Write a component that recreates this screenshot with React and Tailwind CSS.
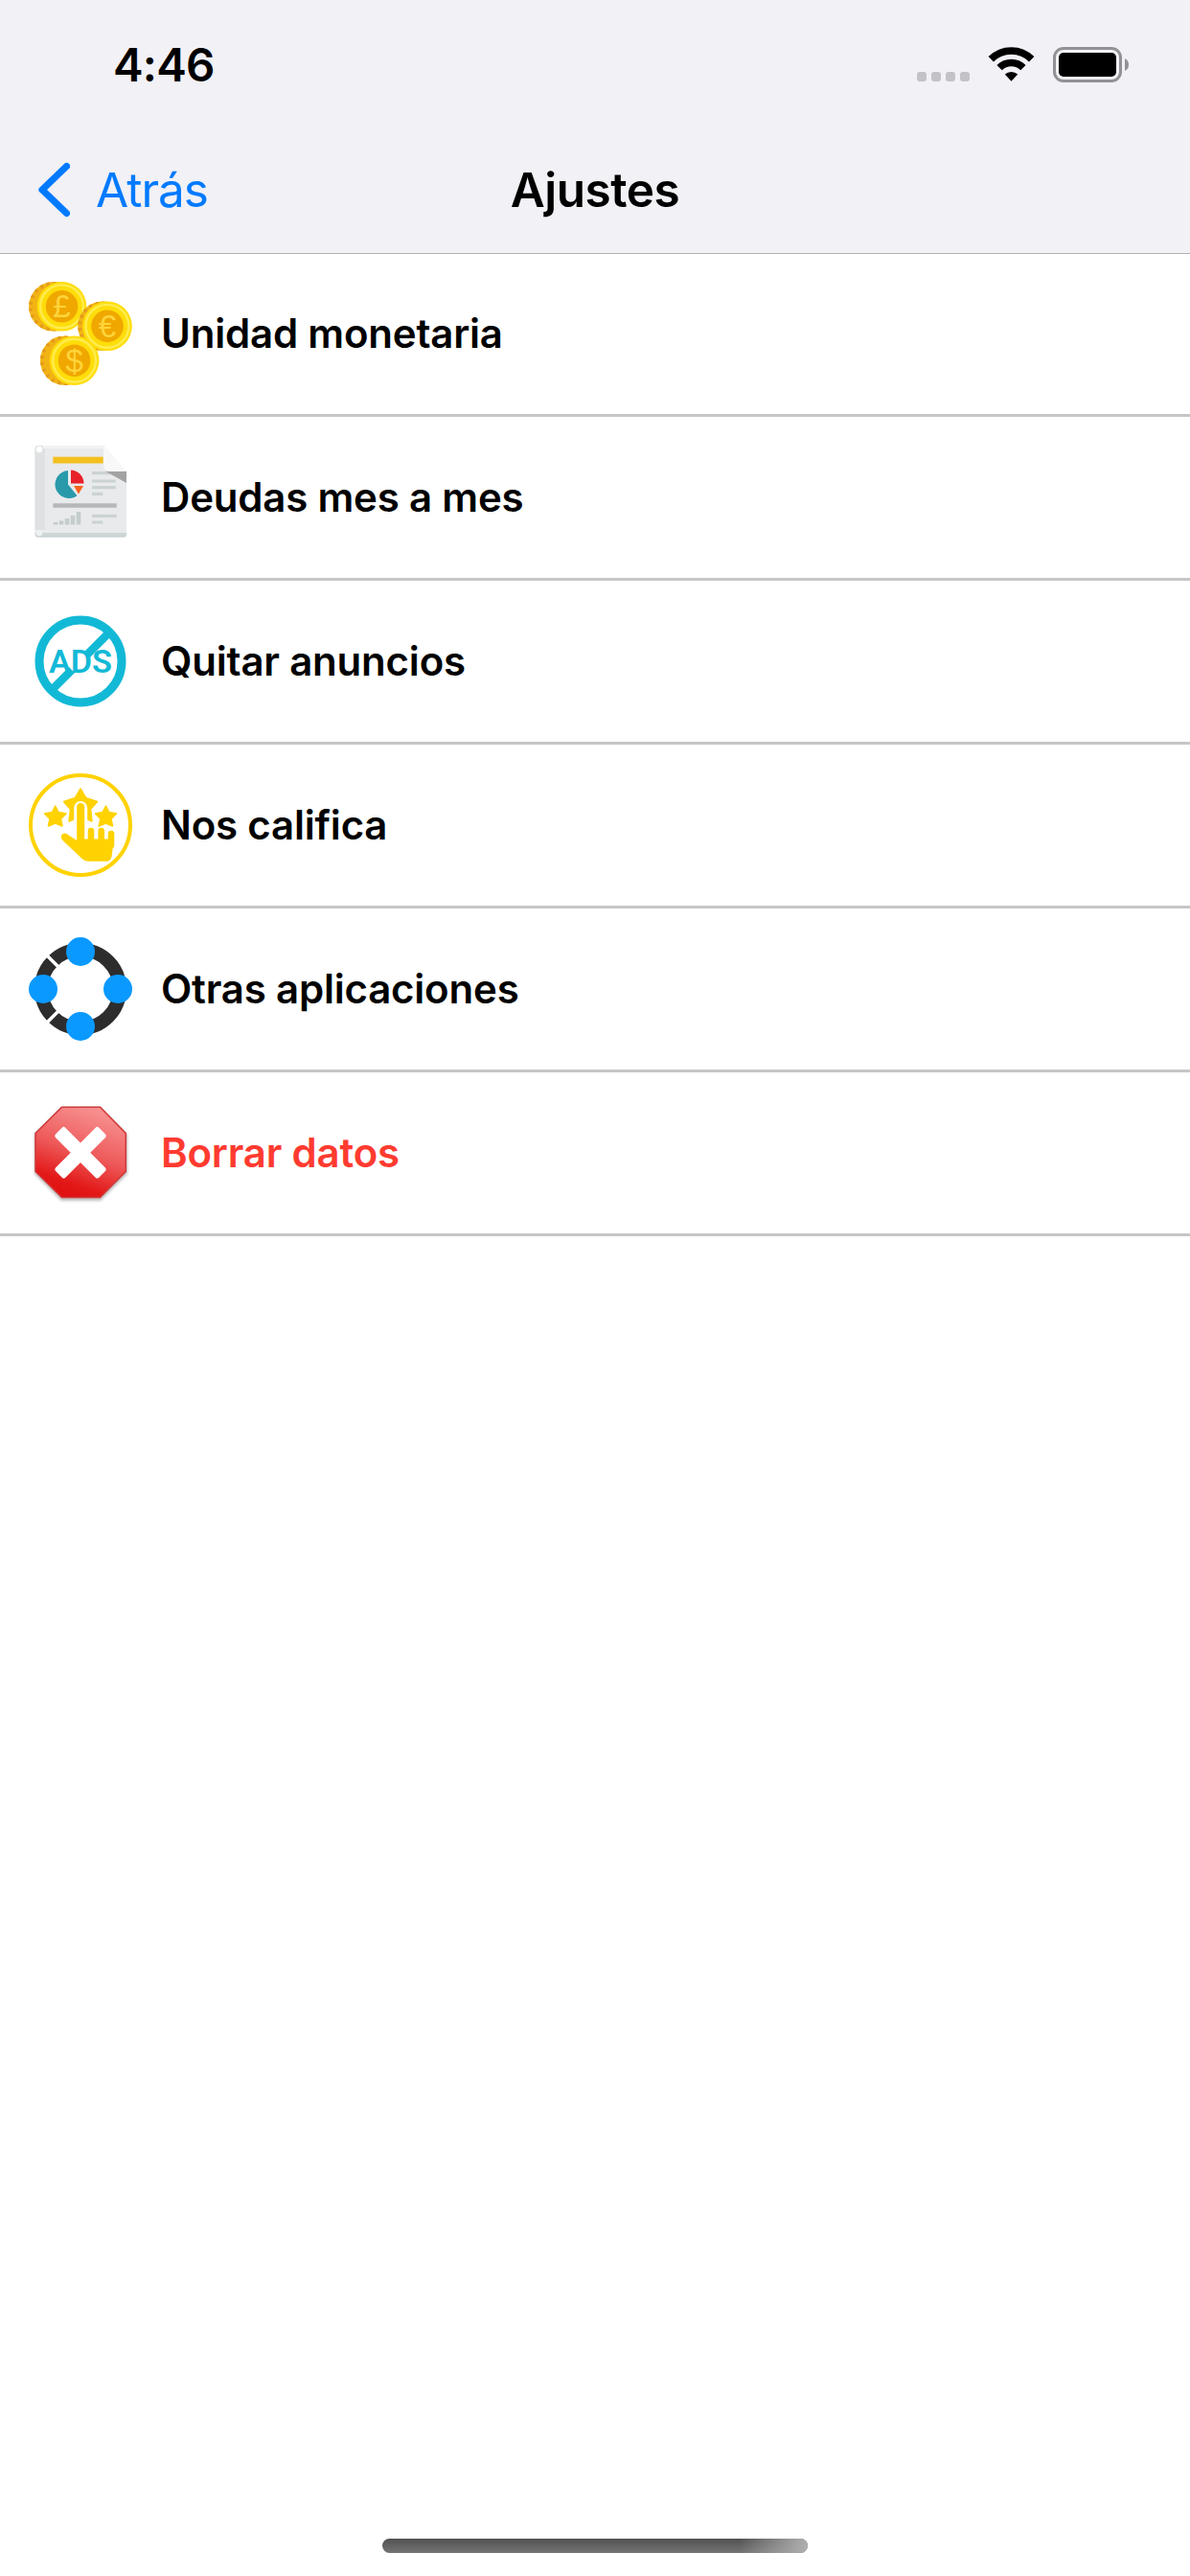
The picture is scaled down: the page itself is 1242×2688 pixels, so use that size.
const GOLD = "#ffdd0a";
const CYAN = "#12b9d6";
const YELLOW = "#ffd200";

function Coin({ x, y, depth, symbol }) {
  return (
    <g>
      <circle cx={x - depth} cy={y} r="25.8" fill="#f2b414" />
      <circle cx={x - depth} cy={y} r="24" fill="none" stroke="#e39a1c" strokeWidth="3.6" strokeDasharray="3 4" />
      <circle cx={x} cy={y} r="25.8" fill={GOLD} />
      <circle cx={x} cy={y} r="22.4" fill="none" stroke="#ffec50" strokeWidth="2.4" />
      <circle cx={x} cy={y} r="16.8" fill="#f0a800" />
      <text
        x={x}
        y={y + 11.5}
        textAnchor="middle"
        fontFamily="Liberation Sans, sans-serif"
        fontSize="33"
        fill="#ffd43a">
        {symbol}
      </text>
    </g>
  );
}

function CoinsIcon() {
  return (
    <svg viewBox="0 0 108 108" className="size-[108px]">
      <Coin x={34.5} y={25.8} depth={8.6} symbol="£" />
      <Coin x={82} y={46.3} depth={5} symbol="€" />
      <Coin x={47.6} y={82.2} depth={9.8} symbol="$" />
    </svg>
  );
}

function ReportIcon() {
  return (
    <svg viewBox="0 0 108 108" className="size-[108px]">
      <path d="M9 0H78L102 27V93Q102 95.5 99 95.5H9.500Q6.500 95.5 6.500 92V3Q6.500 0 9 0Z" fill="#e9eaeb" />
      <path d="M6.500 3Q7 0 10 0H17V88H6.500Z" fill="#dfe1e2" />
      <path d="M15 0H78V3H15Z" fill="#f3f3f4" />
      <path d="M6.500 91H102V93Q102 95.700 99 95.700H10Q6.500 95.700 6.500 91Z" fill="#cdd5d7" />
      <circle cx="11" cy="4" r="3.200" fill="#fff" />
      <circle cx="11" cy="91" r="3.200" fill="#eef1f1" />
      <g stroke="#cbd2d4" strokeWidth="3.200">
        <path d="M66 28.700H86M66 37H90.700M66 43.700H90.700M66 50.300H77.300M66 73.300H91.700M66 80H77.300" />
      </g>
      <path d="M80 26.700H102V39Z" fill="#a3a3a3" />
      <path d="M78 0L102 26.700H84Q78 26.700 78 20Z" fill="#f8f8f8" />
      <rect x="25.300" y="11.700" width="52.400" height="6.800" fill="#f4c01e" />
      <path d="M41 26A14.500 14.500 0 1 0 50.500 52.200L41 40.500Z" fill="#2a9aab" />
      <path d="M44 25.500A14 14 0 0 1 57.500 39.500H44Z" fill="#e8202a" />
      <path d="M47 42H57L52 50.500Z" fill="#f9621c" />
      <path d="M25.300 62.500H91.700" stroke="#b4b8b9" strokeWidth="4.600" />
      <g stroke="#c5cccd" strokeWidth="4.600">
        <path d="M28 82.500V80M34 82.500V78.500M40 82.500V76M46 82.500V73M52 82.500V69" />
      </g>
    </svg>
  );
}

function NoAdsIcon() {
  return (
    <svg viewBox="0 0 108 108" className="size-[108px]">
      <circle cx="54" cy="54" r="43" fill="none" stroke={CYAN} strokeWidth="9" />
      <path d="M84 24L61 47M45 63L25 83" stroke={CYAN} strokeWidth="8.500" />
      <text
        x="21"
        y="66"
        textLength="66"
        lengthAdjust="spacingAndGlyphs"
        fontFamily="Roboto, sans-serif"
        fontWeight="600"
        fontSize="33.500"
        fill={CYAN}>
        ADS
      </text>
    </svg>
  );
}

function RateIcon() {
  return (
    <svg viewBox="0 0 108 108" className="size-[108px]">
      <circle cx="54" cy="54" r="52" fill="none" stroke={YELLOW} strokeWidth="4" />
      <g fill={YELLOW} stroke={YELLOW} strokeWidth="1.500" strokeLinejoin="round">
        <path d="M54 16L59.500 25.500L71.500 29.500L64.500 37.500L66 50L54 45L42 50L43.500 37.500L36.500 29.500L48.500 25.500Z" />
        <path d="M27.700 34L31 40.500L39 42L33.500 47.500L35 55L27.700 52L20.400 55L22 47.500L16.500 42L24.500 40.500Z" />
        <path d="M80.500 34L83.800 40.500L91.500 42L86 47.500L87.500 55L80.500 52L73.200 55L75 47.500L69.500 42L77 40.500Z" />
      </g>
      <path d="M54.200 36V68" stroke="#fff" strokeWidth="14" strokeLinecap="round" />
      <g stroke={YELLOW} strokeWidth="6.600" strokeLinecap="round">
        <path d="M54.200 35V75" strokeWidth="8" />
        <path d="M65 60V75M75.700 60V75M86 63V75" />
      </g>
      <path
        d="M50.200 68.500H89L86.500 87Q85.500 91.700 81 91.700H62Q58 91.700 55 88.500L35 69.500Q32.500 66 35 63.500Q37.500 61.500 41 64L50.200 70Z"
        fill={YELLOW} />
    </svg>
  );
}

function AppsIcon() {
  return (
    <svg viewBox="0 0 108 108" className="size-[108px]">
      <circle cx="54" cy="54" r="41" fill="none" stroke="#2d2d2d" strokeWidth="14" />
      <path d="M19 19L32 32M19 89L32 76" stroke="#fff" strokeWidth="3.500" />
      <g fill="#0a99ff">
        <circle cx="54" cy="15" r="15" />
        <circle cx="54" cy="93" r="15" />
        <circle cx="15" cy="54" r="15" />
        <circle cx="93" cy="54" r="15" />
      </g>
    </svg>
  );
}

function DeleteIcon() {
  return (
    <svg viewBox="0 0 108 108" className="size-[108px]">
      <defs>
        <linearGradient id="stop-fill" x1="0.7" y1="0" x2="0.35" y2="1">
          <stop offset="0" stopColor="#f89494" />
          <stop offset="0.5" stopColor="#ee5a5a" />
          <stop offset="0.85" stopColor="#e31818" />
          <stop offset="1" stopColor="#e01010" />
        </linearGradient>
        <filter id="stop-shadow" x="-10%" y="-10%" width="120%" height="120%">
          <feGaussianBlur stdDeviation="1.5" />
        </filter>
      </defs>
      <path d="M34 7H75L103 35V76L75 104H34L6 76V35Z" fill="#000" opacity="0.25" filter="url(#stop-shadow)" />
      <path d="M34.500 6.300H74.500L101.300 33.500V73.500L74.500 100.500H34.500L7 73.500V33.500Z" fill="url(#stop-fill)" stroke="#cf3a3a" strokeWidth="1.600" />
      <g fill="#fff">
        <rect x="22" y="46.500" width="64" height="14.500" rx="2.500" transform="rotate(45 54 53.700)" />
        <rect x="22" y="46.500" width="64" height="14.500" rx="2.500" transform="rotate(-45 54 53.700)" />
      </g>
    </svg>
  );
}

function StatusBar() {
  return (
    <div className="flex h-[132px] items-start justify-between pl-[118px] pr-[63px]">
      <span className="mt-[40px] text-[47.500px] leading-[56px] font-semibold tracking-[-0.8px]">4:46</span>
      <div className="mt-[49px] flex h-[37px]">
        <div className="mt-[26px] flex gap-[5px]">
          {[0, 1, 2, 3].map((i) => (
            <span key={i} className="size-[10px] rounded-[3px] bg-[#c3c2c7]" />
          ))}
        </div>
        <svg viewBox="0 0 49 37" className="ml-[19px] h-[37px] w-[49px]">
          <g fill="none" stroke="#000" strokeWidth="7.600">
            <path d="M3.300 12.800A30 30 0 0 1 45.700 12.800" />
            <path d="M12.100 21.600A17.500 17.500 0 0 1 36.900 21.600" />
          </g>
          <path d="M17.800 28.600A9.800 9.800 0 0 1 31.200 28.600L24.500 35.700Z" />
        </svg>
        <svg viewBox="0 0 80 37" className="ml-[19px] h-[37px] w-[80px]">
          <rect x="1.500" y="1.500" width="69" height="34" rx="9.500" fill="none" stroke="#929195" strokeWidth="3" />
          <rect x="6" y="6" width="60" height="25" rx="5" />
          <path d="M75 12Q79 14 79 18.500T75 25Z" fill="#929195" />
        </svg>
      </div>
    </div>
  );
}

function NavBar() {
  return (
    <div className="grid h-[132px] grid-cols-3 items-center">
      <button className="flex items-center pl-[39px] text-[#007aff]">
        <svg viewBox="0 0 34 58" className="h-[58px] w-[34px]">
          <path d="M30.500 4.500L5 29L30.500 53.500" fill="none" stroke="currentColor" strokeWidth="7.200" strokeLinecap="round" strokeLinejoin="round" />
        </svg>
        <span className="ml-[27px] text-[49.500px] leading-[60px] tracking-[-1px]">Atrás</span>
      </button>
      <h1 className="text-center text-[49.500px] leading-[60px] font-semibold tracking-[-0.5px]">Ajustes</h1>
    </div>
  );
}

const ITEMS = [
  { label: "Unidad monetaria", icon: CoinsIcon },
  { label: "Deudas mes a mes", icon: ReportIcon },
  { label: "Quitar anuncios", icon: NoAdsIcon },
  { label: "Nos califica", icon: RateIcon },
  { label: "Otras aplicaciones", icon: AppsIcon },
  { label: "Borrar datos", icon: DeleteIcon, danger: true },
];

export default function App() {
  return (
    <div className="flex h-[2688px] w-[1242px] flex-col bg-white font-['Inter',sans-serif] text-black">
      <header className="h-[265px] border-b border-[#b2b1b6] bg-[#f2f1f6]">
        <StatusBar />
        <NavBar />
      </header>
      <ul className="-mt-px">
        {ITEMS.map(({ label, icon: Icon, danger }) => (
          <li key={label} className="flex h-[171px] items-center border-b-[3px] border-[#c6c6c8] pl-[30px]">
            <Icon />
            <span className={`ml-[30px] text-[42px] leading-[52px] font-semibold tracking-[-0.2px] ${danger ? "text-[#ff3b30]" : ""}`}>
              {label}
            </span>
          </li>
        ))}
      </ul>
      <div className="mx-auto mt-auto mb-[24px] h-[15px] w-[444px] rounded-full bg-linear-to-b from-[#505150] to-[#747474]">
        <div className="ml-auto h-full w-[72px] rounded-r-full bg-linear-to-r from-transparent to-[#b0b0b0]" />
      </div>
    </div>
  );
}
